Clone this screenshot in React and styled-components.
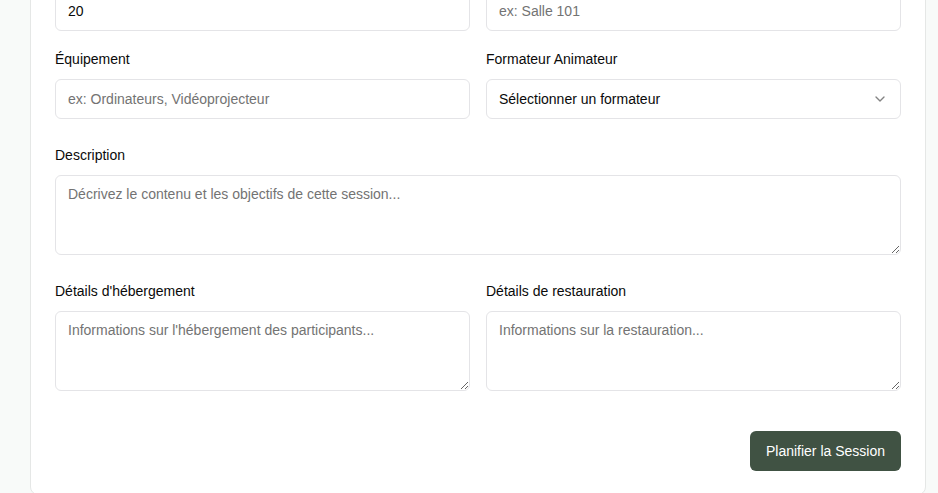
import React from "react";
import styled, { createGlobalStyle } from "styled-components";
import { ChevronDown } from "lucide-react";

const GlobalStyle = createGlobalStyle`
  body {
    margin: 0;
    background: #f8faf9;
    font-family: "Liberation Sans", Arial, sans-serif;
    overflow: hidden;
  }
`;

const Page = styled.div`
  padding-left: 30px;
`;

const Card = styled.div`
  width: 896px;
  box-sizing: border-box;
  margin-top: -64px;
  background: #ffffff;
  border: 1px solid #e5e7e6;
  border-radius: 8px;
  padding: 24px 24px 23px;
`;

const Form = styled.form`
  display: flex;
  flex-direction: column;
  gap: 26px;
`;

const Grid = styled.div`
  display: grid;
  grid-template-columns: 1fr 1fr;
  column-gap: 16px;
  row-gap: ${(p) => p.$rowGap || 19}px;
`;

const Field = styled.div`
  display: flex;
  flex-direction: column;
`;

const Label = styled.label`
  font-size: 14px;
  line-height: 20px;
  color: #0a0a0a;
  margin-bottom: 10px;
`;

const Input = styled.input`
  height: 40px;
  box-sizing: border-box;
  border: 1px solid #e4e4e7;
  border-radius: 6px;
  padding: 0 12px;
  font-family: inherit;
  font-size: 14px;
  color: #0a0a0a;
  background: #fff;
  outline: none;
  &::placeholder {
    color: #737373;
  }
`;

const SelectBox = styled.div`
  height: 40px;
  box-sizing: border-box;
  border: 1px solid #e4e4e7;
  border-radius: 6px;
  padding: 0 12px;
  display: flex;
  align-items: center;
  justify-content: space-between;
  font-size: 14px;
  color: #0a0a0a;
  background: #fff;
  svg {
    color: #0a0a0a;
    opacity: 0.5;
  }
`;

const TextArea = styled.textarea`
  height: 80px;
  box-sizing: border-box;
  border: 1px solid #e4e4e7;
  border-radius: 6px;
  padding: 8px 12px;
  font-family: inherit;
  font-size: 14px;
  line-height: 20px;
  color: #0a0a0a;
  background: #fff;
  outline: none;
  &::placeholder {
    color: #737373;
  }
`;

const Actions = styled.div`
  display: flex;
  justify-content: flex-end;
  margin-top: 14px;
`;

const Button = styled.button`
  height: 40px;
  padding: 0 16px;
  border: none;
  border-radius: 6px;
  background: #405243;
  color: #ffffff;
  font-family: inherit;
  font-size: 14px;
  cursor: pointer;
`;

export default function App() {
  return (
    <>
      <GlobalStyle />
      <Page>
        <Card>
          <Form onSubmit={(e) => e.preventDefault()}>
            <Grid $rowGap={18}>
              <Field>
                <Label>Nombre de participants</Label>
                <Input type="number" defaultValue="20" />
              </Field>
              <Field>
                <Label>Salle</Label>
                <Input placeholder="ex: Salle 101" />
              </Field>
              <Field>
                <Label>Équipement</Label>
                <Input placeholder="ex: Ordinateurs, Vidéoprojecteur" />
              </Field>
              <Field>
                <Label>Formateur Animateur</Label>
                <SelectBox>
                  <span>Sélectionner un formateur</span>
                  <ChevronDown size={16} />
                </SelectBox>
              </Field>
            </Grid>
            <Field>
              <Label>Description</Label>
              <TextArea placeholder="Décrivez le contenu et les objectifs de cette session..." />
            </Field>
            <Grid>
              <Field>
                <Label>Détails d'hébergement</Label>
                <TextArea placeholder="Informations sur l'hébergement des participants..." />
              </Field>
              <Field>
                <Label>Détails de restauration</Label>
                <TextArea placeholder="Informations sur la restauration..." />
              </Field>
            </Grid>
            <Actions>
              <Button type="submit">Planifier la Session</Button>
            </Actions>
          </Form>
        </Card>
      </Page>
    </>
  );
}
